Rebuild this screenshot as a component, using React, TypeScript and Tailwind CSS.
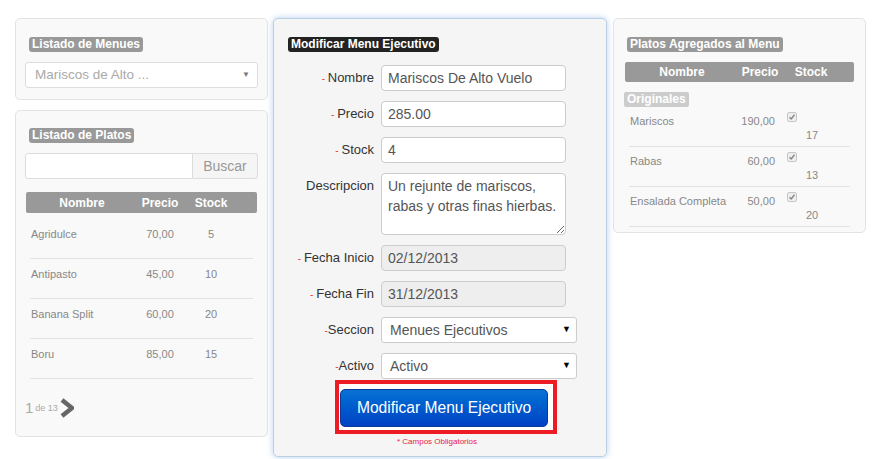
import React from 'react';

const platos = [
  { nombre: 'Agridulce', precio: '70,00', stock: '5' },
  { nombre: 'Antipasto', precio: '45,00', stock: '10' },
  { nombre: 'Banana Split', precio: '60,00', stock: '20' },
  { nombre: 'Boru', precio: '85,00', stock: '15' },
];

const agregados = [
  { nombre: 'Mariscos', precio: '190,00', stock: '17' },
  { nombre: 'Rabas', precio: '60,00', stock: '13' },
  { nombre: 'Ensalada Completa', precio: '50,00', stock: '20' },
];

const Badge = ({ children, dark }: { children: React.ReactNode; dark?: boolean }) => (
  <span
    className={`block h-[15px] px-[3px] rounded-[3px] text-[12px] leading-[15px] font-bold text-white ${
      dark ? 'bg-[#222]' : 'bg-[#999]'
    }`}
  >
    {children}
  </span>
);

const Req = ({ space = true }: { space?: boolean }) => (
  <span className="text-[#e8403a] text-[10px] align-middle">-{space ? '\u00a0' : ''}</span>
);

const FieldRow = ({
  label,
  req = true,
  space = true,
  children,
}: {
  label: string;
  req?: boolean;
  space?: boolean;
  children: React.ReactNode;
}) => (
  <div className="flex items-center h-[26px]">
    <div className="w-[100px] text-right text-[13px] text-[#333]">
      {req && <Req space={space} />}
      {label}
    </div>
    <div className="ml-[7px]">{children}</div>
  </div>
);

const TextInput = ({ value, disabled }: { value: string; disabled?: boolean }) => (
  <div
    className={`w-[185px] h-[26px] border border-[#ccc] rounded-[4px] px-[6px] text-[14px] leading-[24px] text-[#555] ${
      disabled ? 'bg-[#eee]' : 'bg-white'
    }`}
  >
    {value}
  </div>
);

const FakeSelect = ({ value }: { value: string }) => (
  <div className="w-[196px] h-[26px] border border-[#ccc] rounded-[3px] bg-white flex items-center justify-between pl-[8px] pr-[5px] text-[14px] text-[#555]">
    <span>{value}</span>
    <span className="text-[9px] text-black">▼</span>
  </div>
);

export default function App() {
  return (
    <div
      className="min-h-[459px] bg-white flex items-start pt-[18px] pl-[15px]"
      style={{ fontFamily: '"Liberation Sans", Arial, sans-serif' }}
    >
      {/* Left column */}
      <div className="w-[253px] flex flex-col gap-[10px]">
        <div className="h-[82px] border border-[#e3e3e3] rounded-[5px] bg-[#f9f9f9] pt-[18px] px-[9px]">
          <div className="flex pl-[4px]">
            <Badge>Listado de Menues</Badge>
          </div>
          <div className="mt-[10px] h-[26px] border border-[#ddd] rounded-[3px] bg-white flex items-center justify-between pl-[9px] pr-[7px]">
            <span className="text-[13.5px] text-[#aaa]">Mariscos de Alto ...</span>
            <span className="text-[8px] text-[#777]">▼</span>
          </div>
        </div>

        <div className="h-[327px] border border-[#e3e3e3] rounded-[5px] bg-[#f9f9f9] pt-[17px] px-[9px]">
          <div className="flex pl-[4px]">
            <Badge>Listado de Platos</Badge>
          </div>
          <div className="mt-[10px] flex h-[26px]">
            <div className="flex-1 border border-[#ddd] rounded-l-[3px] bg-white" />
            <div className="w-[65px] border border-l-0 border-[#ddd] rounded-r-[3px] bg-[#f5f5f5] text-[14px] text-[#999] flex items-center justify-center">
              Buscar
            </div>
          </div>
          <div className="mt-[13px] mx-[1px] h-[21px] bg-[#999] rounded-[2px] flex items-center text-[12px] font-bold text-white">
            <div className="w-[112px] text-center">Nombre</div>
            <div className="w-[44px] text-center">Precio</div>
            <div className="w-[58px] text-center">Stock</div>
          </div>
          <div className="mt-[6px] mx-[5px]">
            {platos.map((p) => (
              <div key={p.nombre} className="h-[40px] border-b border-[#e2e2e2] flex items-start pt-[7px] text-[11px] text-[#888]">
                <div className="w-[108px] pl-[1px]">{p.nombre}</div>
                <div className="w-[44px] text-center">{p.precio}</div>
                <div className="w-[58px] text-center">{p.stock}</div>
              </div>
            ))}
          </div>
          <div className="mt-[18px] flex items-center text-[#aaa]">
            <span className="text-[15px]">1</span>
            <span className="text-[9px] ml-[2px]">de 13</span>
            <svg width="14" height="20" viewBox="0 0 14 20" className="ml-[2px]">
              <path d="M2 2 L12 10 L2 18" fill="none" stroke="#666" strokeWidth="4.5" />
            </svg>
          </div>
        </div>
      </div>

      {/* Middle column */}
      <div className="ml-[5px] w-[334px] h-[439px] border border-[#bcd0e4] rounded-[5px] bg-[#f5f5f5] shadow-[0_0_6px_rgba(90,150,220,0.45)] pt-[18px]">
        <div className="flex pl-[14px]">
          <Badge dark>Modificar Menu Ejecutivo</Badge>
        </div>
        <div className="mt-[13px] flex flex-col gap-[10px]">
          <FieldRow label="Nombre">
            <TextInput value="Mariscos De Alto Vuelo" />
          </FieldRow>
          <FieldRow label="Precio">
            <TextInput value="285.00" />
          </FieldRow>
          <FieldRow label="Stock">
            <TextInput value="4" />
          </FieldRow>
          <div className="flex items-start">
            <div className="w-[100px] text-right text-[13px] text-[#333] leading-[20px] pt-[3px]">Descripcion</div>
            <textarea
              readOnly
              value={'Un rejunte de mariscos, rabas y otras finas hierbas.'}
              className="ml-[7px] w-[185px] h-[62px] border border-[#ccc] rounded-[4px] bg-white px-[6px] pt-[2px] text-[14px] leading-[20px] text-[#555] outline-none"
              style={{ fontFamily: '"Liberation Sans", Arial, sans-serif' }}
            />
          </div>
          <FieldRow label="Fecha Inicio">
            <TextInput value="02/12/2013" disabled />
          </FieldRow>
          <FieldRow label="Fecha Fin">
            <TextInput value="31/12/2013" disabled />
          </FieldRow>
          <FieldRow label="Seccion" space={false}>
            <FakeSelect value="Menues Ejecutivos" />
          </FieldRow>
          <FieldRow label="Activo" space={false}>
            <FakeSelect value="Activo" />
          </FieldRow>
        </div>
        <div className="mt-[1px] ml-[61px] w-[222px] h-[54px] border-4 border-[#ed1c24] bg-white pl-[1px] pt-[5px]">
          <button className="w-[208px] h-[38px] rounded-[5px] bg-gradient-to-b from-[#0a72d4] to-[#0040c4] text-white text-[15.6px] border border-[#0a3a9a]">
            Modificar Menu Ejecutivo
          </button>
        </div>
        <div className="mt-[2px] text-center text-[8px] text-[#e8204a] pr-[6px]">* Campos Obligatorios</div>
      </div>

      {/* Right column */}
      <div className="ml-[6px] w-[253px] h-[215px] border border-[#e3e3e3] rounded-[5px] bg-[#f9f9f9] pt-[18px] px-[10px]">
        <div className="flex pl-[3px]">
          <Badge>Platos Agregados al Menu</Badge>
        </div>
        <div className="mt-[10px] mx-[1px] h-[20px] bg-[#999] rounded-[2px] flex items-center text-[12px] font-bold text-white">
          <div className="w-[114px] text-center">Nombre</div>
          <div className="w-[42px] text-center">Precio</div>
          <div className="w-[60px] text-center">Stock</div>
        </div>
        <div className="mt-[10px] flex">
          <span className="block h-[15px] px-[3px] rounded-[2px] bg-[#ccc] text-[12px] leading-[15px] font-bold text-white">
            Originales
          </span>
        </div>
        <div className="mx-[5px]">
          {agregados.map((p) => (
            <div key={p.nombre} className="h-[40px] border-b border-[#e2e2e2] flex items-start pt-[6px] text-[11px] text-[#888]">
              <div className="w-[110px] pl-[1px]">{p.nombre}</div>
              <div className="w-[36px] text-right">{p.precio}</div>
              <div className="ml-[12px] flex flex-col">
                <span className="w-[10px] h-[10px] mt-[-1px] border border-[#c8c8c8] rounded-[2px] bg-[#eee] flex items-center justify-center">
                  <svg width="8" height="8" viewBox="0 0 8 8">
                    <path d="M1.5 4.2 L3.2 6 L6.5 1.8" fill="none" stroke="#888" strokeWidth="1.4" />
                  </svg>
                </span>
                <span className="ml-[19px] mt-[5px]">{p.stock}</span>
              </div>
            </div>
          ))}
        </div>
      </div>
    </div>
  );
}
